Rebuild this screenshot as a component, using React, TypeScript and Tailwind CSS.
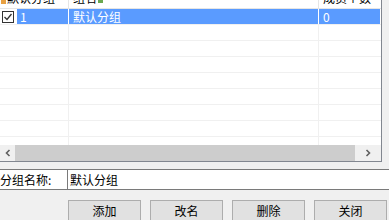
const font = { fontFamily: '"Noto Sans CJK SC", "DejaVu Sans", sans-serif' };

const Check = () => (
  <div className="w-[12px] h-[12px] border border-[#333] bg-white flex items-center justify-center">
    <svg width="10" height="10" viewBox="0 0 10 10">
      <path d="M1.5 5 L4 7.5 L8.5 2" fill="none" stroke="#333" strokeWidth="1.3" />
    </svg>
  </div>
);

const App = () => {
  const emptyRows = Array.from({ length: 8 });

  return (
    <div className="w-[389px] h-[220px] overflow-hidden bg-[#f0f0f0] text-[12px] text-black leading-none" style={font}>
      {/* list */}
      <div className="w-[382px] h-[162px] bg-white border-r border-b border-[#828790] flex flex-col">
        {/* header, mostly scrolled out of view */}
        <div className="h-[9px] overflow-hidden border-b border-[#e5e5e5] shrink-0">
          <div className="flex h-[20px] -mt-[12px]">
            <div className="w-[69px] border-r border-[#e5e5e5] flex items-center pl-[1px]">
              <span className="w-[5px] h-[12px] bg-[#e8a040] mr-[1px]" />
              <span>默认分组</span>
            </div>
            <div className="w-[250px] border-r border-[#e5e5e5] flex items-center pl-[4px]">
              <span>组名</span>
              <span className="w-[5px] h-[10px] bg-[#6aa84f] ml-[1px]" />
            </div>
            <div className="flex-1 flex items-center pl-[4px]">
              <span>成员个数</span>
            </div>
          </div>
        </div>

        {/* rows */}
        <div className="h-[136px] overflow-hidden">
          <div className="flex h-[16px] border-b border-[#f0f0f0]">
            <div className="w-[69px] border-r border-white flex items-center">
              <div className="w-[17px] pl-[2px] flex items-center"><Check /></div>
              <div className="flex-1 h-full bg-[#5a9bff] text-white flex items-center pl-[3px]">1</div>
            </div>
            <div className="w-[250px] border-r border-white bg-[#5a9bff] text-white flex items-center pl-[4px]">默认分组</div>
            <div className="w-[61px] bg-[#5a9bff] text-white flex items-center pl-[4px]">0</div>
          </div>
          {emptyRows.map((_, i) => (
            <div key={i} className="flex h-[16px] border-b border-[#f0f0f0]">
              <div className="w-[69px] border-r border-[#f0f0f0]" />
              <div className="w-[250px] border-r border-[#f0f0f0]" />
              <div className="flex-1" />
            </div>
          ))}
        </div>

        {/* horizontal scrollbar */}
        <div className="h-[16px] bg-[#f0f0f0] flex items-stretch shrink-0">
          <div className="w-[15px] flex items-center justify-center">
            <svg width="8" height="8" viewBox="0 0 8 8">
              <path d="M5.5 1 L2.5 4 L5.5 7" fill="none" stroke="#606060" strokeWidth="1.6" />
            </svg>
          </div>
          <div className="w-[340px] bg-[#cdcdcd]" />
          <div className="flex-1 flex items-center justify-center">
            <svg width="8" height="8" viewBox="0 0 8 8">
              <path d="M2.5 1 L5.5 4 L2.5 7" fill="none" stroke="#606060" strokeWidth="1.6" />
            </svg>
          </div>
        </div>
      </div>

      {/* name field */}
      <div className="mt-[7px] h-[21px] bg-white border-y border-[#7a7a7a] flex items-center">
        <div className="w-[67px]">分组名称:</div>
        <div className="h-full flex-1 border-l border-[#7a7a7a] flex items-center pl-[2px]">默认分组</div>
      </div>

      {/* buttons */}
      <div className="mt-[10px] flex gap-[9px] pl-[68px]">
        {["添加", "改名", "删除", "关闭"].map((t) => (
          <div key={t} className="w-[73px] h-[22px] bg-[#e1e1e1] border border-[#adadad] flex items-center justify-center">
            {t}
          </div>
        ))}
      </div>
    </div>
  );
};

export default App;
